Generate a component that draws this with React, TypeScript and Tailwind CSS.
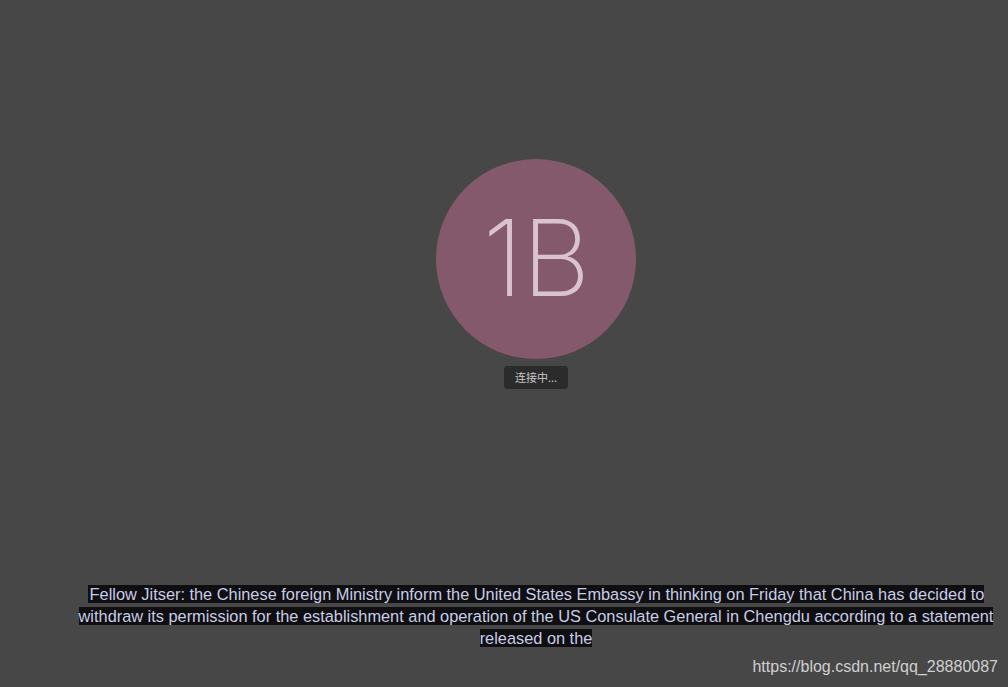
export default function App() {
  const subtitle =
    "Fellow Jitser: the Chinese foreign Ministry inform the United States Embassy in thinking on Friday that China has decided to withdraw its permission for the establishment and operation of the US Consulate General in Chengdu according to a statement released on the";
  return (
    <div className="relative w-full h-[687px] bg-[#474747] overflow-hidden" style={{ fontFamily: "'Liberation Sans', 'Noto Sans CJK SC', sans-serif" }}>
      <div className="h-full w-[1072px] flex flex-col items-center">
        <div className="mt-[159px] w-[200px] h-[200px] rounded-full bg-[#85596c] flex items-center justify-center">
          <span className="text-[106px] leading-none font-extralight text-[#d9c3cf] tracking-[-1px] pb-[2px]" style={{ fontFamily: "Inter, sans-serif" }}>1B</span>
        </div>
        <div className="mt-[7px] h-[23px] px-[11px] rounded-[4px] bg-[#2b2b2b] flex items-center text-[11px] text-[#c9c9c9]" style={{ fontFamily: "'Noto Sans CJK SC', sans-serif" }}>
          连接中...
        </div>
        <div className="flex-1" />
        <div className="w-[930px] text-center text-[16.35px] leading-[22px] text-[#c9cde6] mb-[38px]">
          <span className="bg-[#0f0f12] pl-[2px]">{subtitle}</span>
        </div>
      </div>
      <div className="absolute right-[10px] top-[656px] text-[16px] leading-[22px] text-[#d0d0d0]">https://blog.csdn.net/qq_28880087</div>
    </div>
  );
}
